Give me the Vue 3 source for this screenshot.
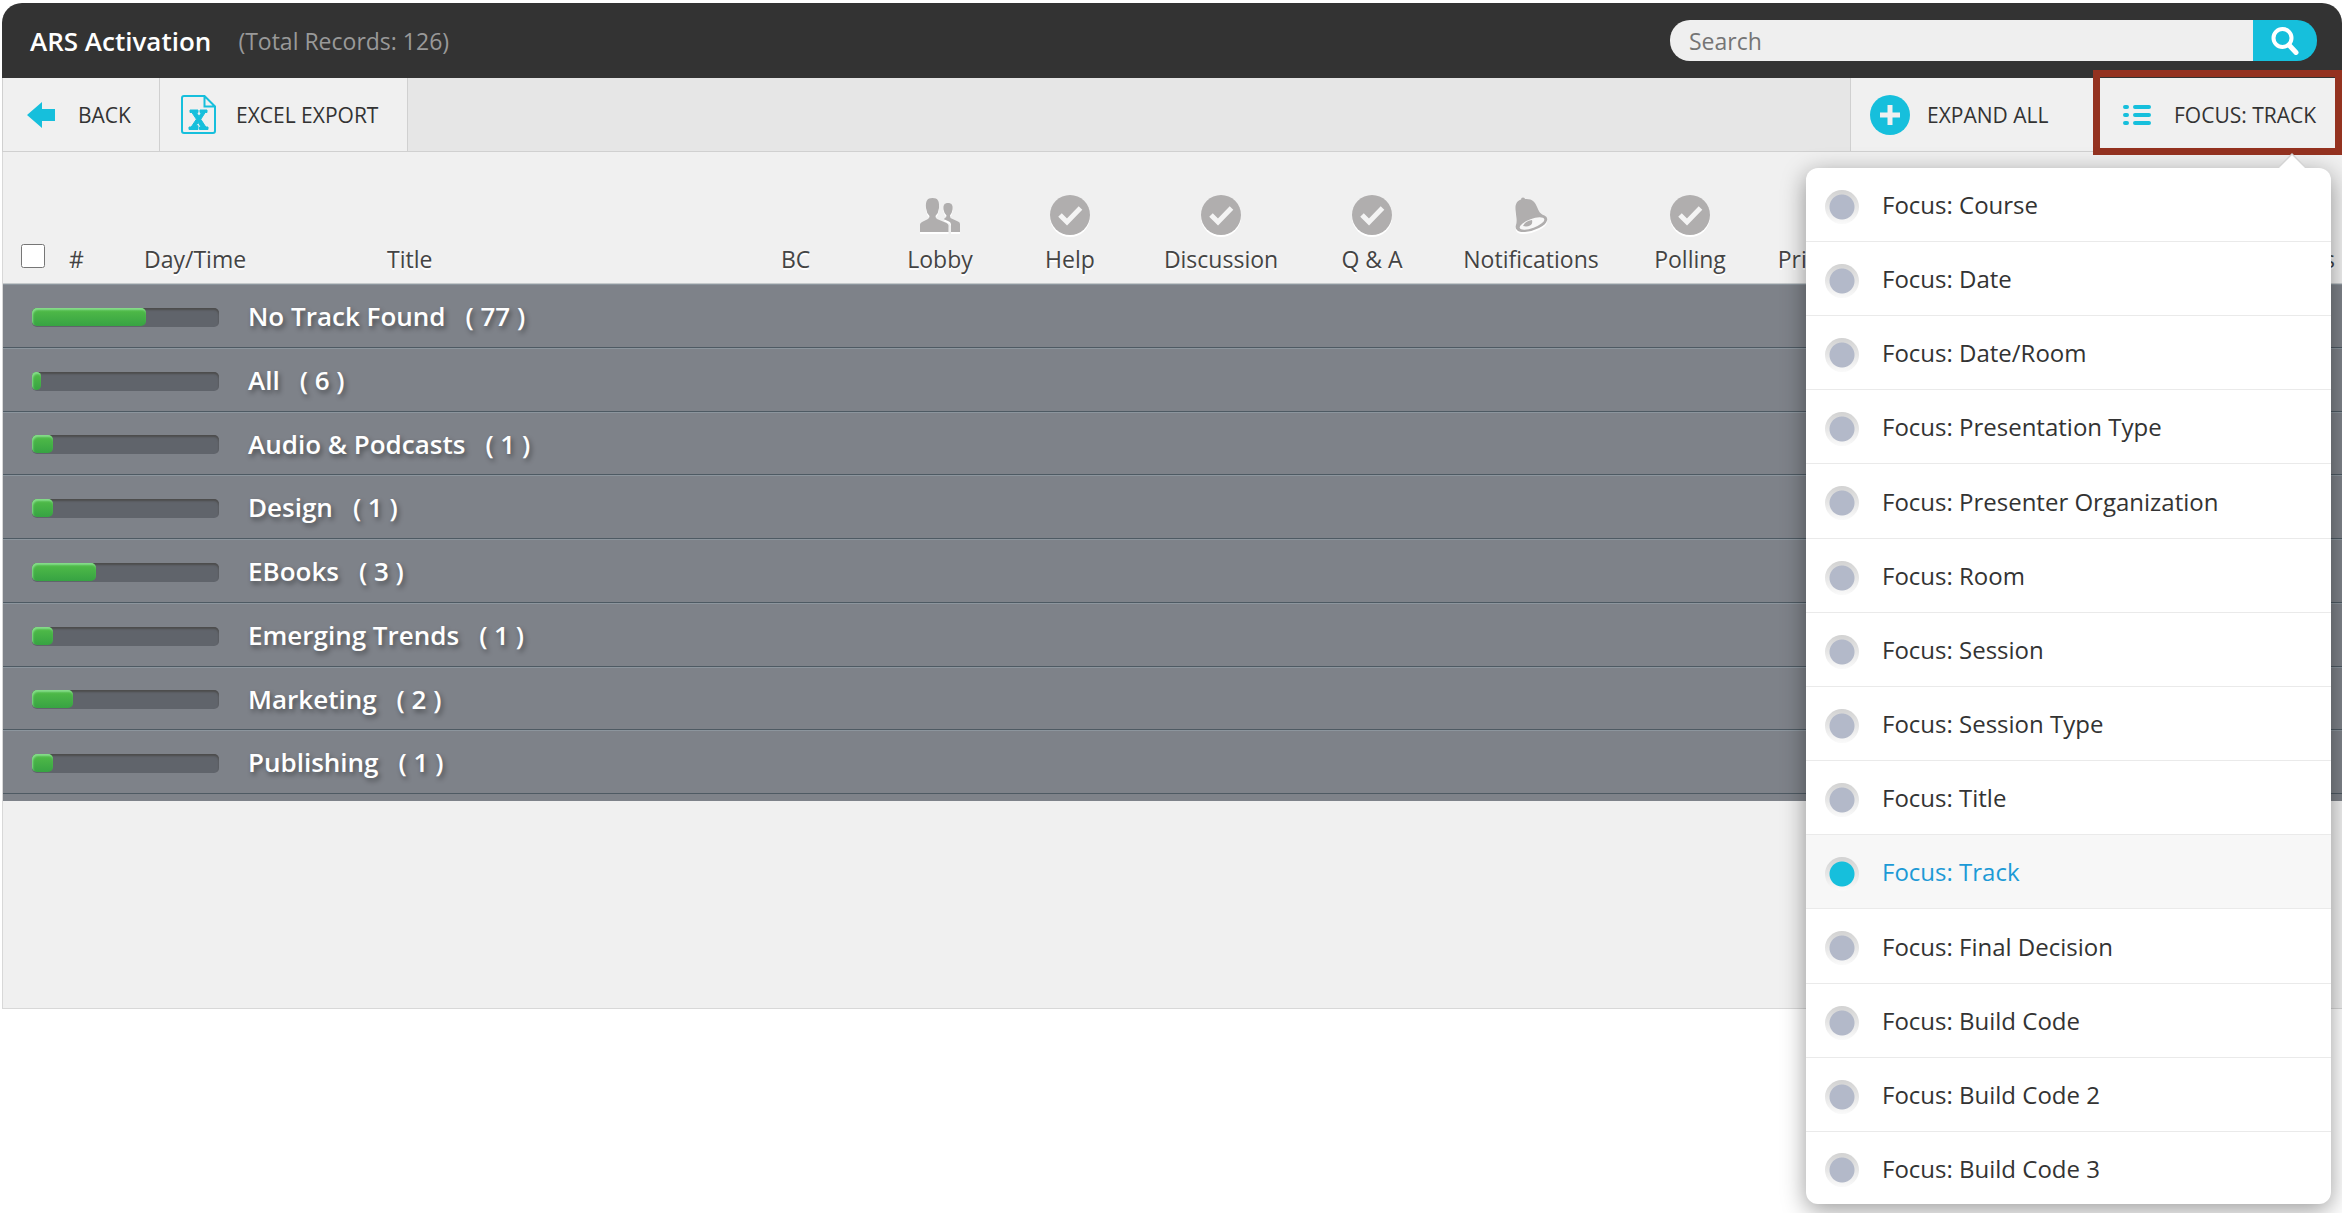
<script setup>
import { ref } from 'vue'

const search = ref('')
const allSelected = ref(false)
const focus = ref('Track')

const focusOptions = [
  'Course', 'Date', 'Date/Room', 'Presentation Type', 'Presenter Organization',
  'Room', 'Session', 'Session Type', 'Title', 'Track', 'Final Decision',
  'Build Code', 'Build Code 2', 'Build Code 3',
]

const features = [
  { label: 'Lobby', icon: 'people' },
  { label: 'Help', icon: 'check' },
  { label: 'Discussion', icon: 'check' },
  { label: 'Q & A', icon: 'check' },
  { label: 'Notifications', icon: 'bell' },
  { label: 'Polling', icon: 'check' },
  { label: 'Private', icon: '' },
]

const tracks = [
  { name: 'No Track Found', count: 77, progress: 61 },
  { name: 'All', count: 6, progress: 5 },
  { name: 'Audio & Podcasts', count: 1, progress: 11 },
  { name: 'Design', count: 1, progress: 11 },
  { name: 'EBooks', count: 3, progress: 34 },
  { name: 'Emerging Trends', count: 1, progress: 11 },
  { name: 'Marketing', count: 2, progress: 22 },
  { name: 'Publishing', count: 1, progress: 11 },
]
</script>

<template>
  <main class="page">
    <header class="titlebar">
      <h1>ARS Activation</h1>
      <span class="total">(Total Records: 126)</span>
      <form class="search" role="search" @submit.prevent>
        <input v-model="search" type="text" placeholder="Search" aria-label="Search" />
        <button type="submit" aria-label="Search">
          <svg width="28" height="28" viewBox="0 0 28 28" fill="none" stroke="#fff">
            <circle cx="11.500" cy="11" r="9" stroke-width="4" />
            <path d="M18 18l7 7.500" stroke-width="5" stroke-linecap="round" />
          </svg>
        </button>
      </form>
    </header>

    <nav class="toolbar">
      <button class="tool back" type="button">
        <svg width="28" height="26" viewBox="0 0 28 26" fill="#16bfdc">
          <path d="M0 13L15 0v7h13v12H15v7z" />
        </svg>
        Back
      </button>
      <button class="tool export" type="button">
        <svg width="35" height="39" viewBox="0 0 35 39">
          <path d="M3 1h20.500L34 11.500V36a2 2 0 0 1-2 2H3a2 2 0 0 1-2-2V3a2 2 0 0 1 2-2zM23.500 1v10.500H34" fill="none" stroke="#16bfdc" stroke-width="2" />
          <path d="M9 15h8v2.500h-1.500l2.500 4 2.500-4H19V15h7v2.500h-1.800l-4.400 6.800 5 7.700H27v2.500h-8.500V32h1.500l-2.800-4.500-2.200 3.200h2v3.800H8V32h2.200l5.200-7.800-4.500-6.700H9z" fill="#16bfdc" stroke="#16bfdc" />
        </svg>
        Excel Export
      </button>
      <button class="tool expand" type="button">
        <svg width="40" height="40" viewBox="0 0 40 40">
          <circle cx="20" cy="20" r="20" fill="#16bfdc" />
          <path d="M20 10v20M10 20h20" stroke="#f0f0f0" stroke-width="5" />
        </svg>
        Expand All
      </button>
      <div class="focus">
        <button class="tool focus-button" type="button" aria-haspopup="true" aria-expanded="true">
          <svg width="28" height="20" viewBox="0 0 28 20" stroke="#16bfdc" stroke-width="4" stroke-linecap="round">
            <path d="M2 2h2M2 10h2M2 18h2M12 2h14M12 10h14M12 18h14" />
          </svg>
          Focus: Track
        </button>
        <div class="menu" role="radiogroup" aria-label="Focus">
          <label v-for="option in focusOptions" :key="option" class="option" :class="{ selected: option === focus }">
            <input v-model="focus" type="radio" name="focus" :value="option" />
            Focus: {{ option }}
          </label>
        </div>
      </div>
    </nav>

    <section class="content">
      <table>
        <colgroup>
          <col class="c-select" />
          <col class="c-number" />
          <col class="c-day" />
          <col class="c-title" />
          <col class="c-bc" />
          <col class="c-small" />
          <col class="c-small" />
          <col class="c-wide" />
          <col class="c-small" />
          <col class="c-wider" />
          <col class="c-small" />
          <col class="c-private" />
          <col />
        </colgroup>
        <thead>
          <tr>
            <th class="select"><input v-model="allSelected" type="checkbox" aria-label="Select all" /></th>
            <th>#</th>
            <th>Day/Time</th>
            <th>Title</th>
            <th>BC</th>
            <th v-for="feature in features" :key="feature.label" class="feature">
              <svg v-if="feature.icon === 'check'" width="40" height="40" viewBox="0 0 40 40">
                <circle cx="20" cy="20" r="20" fill="#b0aeae" />
                <path d="M10 20l7 7 13.500-14" fill="none" stroke="#f4f4f4" stroke-width="5" />
              </svg>
              <svg v-else-if="feature.icon === 'people'" width="40" height="40" viewBox="0 0 40 40" fill="#b0aeae">
                <path d="M0 37v-7.500q0-1.500 2-2.500l6-3q1.500-1 1.500-3-3-3-3.500-8C5.500 6 7 3 12.500 3s7 3 6.500 10q-.5 5-3.500 8 0 2 1.500 3l9.500 4q2 1 2 2.500V37z" />
                <path d="M31 37v-7.500q0-2-2-3L24 24.300l.8-1.300q1.700-.5 1.700-2.500-2.500-2.500-3-6c-.5-4.500 1-6.500 4.500-6.500s5 2 4.500 6.500q-.5 3.500-2.500 6 0 2.500 1.500 3l6.500 3q2 .8 2 2.500v8z" />
              </svg>
              <svg v-else-if="feature.icon === 'bell'" width="40" height="40" viewBox="0 0 40 40">
                <path d="M6 35q-2-1.500-1-5 1-3 .3-8L4.500 15C4 9 6 6 10 4.500q0-2 2-2t2 1.500c7-.5 10 2.500 12.500 9 2 5 3.500 6 7 7.500q3.500 1.500 2.500 5-1 4-8 7.500T14 37q-6 .5-8-2z" fill="#b0aeae" />
                <ellipse cx="21" cy="28.500" rx="13" ry="4.500" transform="rotate(-20 21 28.500)" fill="#f7f7f7" />
                <path d="M12 31q2-5 9-6 1 4-2 5.500T12 31z" fill="#b0aeae" />
              </svg>
              {{ feature.label }}
            </th>
            <th class="last">Surveys</th>
          </tr>
        </thead>
        <tbody>
          <tr v-for="track in tracks" :key="track.name">
            <td colspan="13">
              <div class="track">
                <div class="bar" role="progressbar" :aria-label="track.name" :aria-valuenow="track.progress">
                  <div class="fill" :style="{ width: track.progress + '%' }"></div>
                </div>
                <span>{{ track.name }}</span>
                <span>( {{ track.count }} )</span>
              </div>
            </td>
          </tr>
        </tbody>
      </table>
    </section>
  </main>
</template>

<style>
body {
  margin: 0;
  background: #fff;
}
</style>

<style scoped>
* {
  box-sizing: border-box;
}

.page {
  min-height: 100vh;
  padding: 3px 0 0 2px;
  font-family: "Open Sans", "Noto Sans", sans-serif;
  font-size: 24px;
  color: #333;
}

button,
input {
  margin: 0;
  font: inherit;
}

button {
  border: 0;
  cursor: pointer;
}

svg {
  flex: none;
}

.titlebar {
  display: flex;
  align-items: center;
  height: 75px;
  padding: 0 25px 0 28px;
  border-radius: 20px 20px 0 0;
  background: #333;
}

h1 {
  margin: 0;
  font-size: 26px;
  font-weight: 600;
  color: #fff;
}

.total {
  margin-left: 27px;
  color: #999;
  font-size: 23px;
}

.search {
  display: flex;
  width: 647px;
  height: 41px;
  margin-left: auto;
}

.search input {
  flex: 1;
  min-width: 0;
  padding: 0 19px;
  border: 0;
  border-radius: 20px 0 0 20px;
  background: #efefef;
  color: #333;
  font-size: 23px;
}

.search input::placeholder {
  color: #757575;
}

.search button {
  display: flex;
  align-items: center;
  justify-content: center;
  width: 64px;
  padding: 0;
  border-radius: 0 20px 20px 0;
  background: #16bfdc;
}

.toolbar {
  display: flex;
  height: 74px;
  border: solid #d0d0d0;
  border-width: 0 0 1px 1px;
  background: #e6e6e6;
}

.tool {
  display: flex;
  align-items: center;
  padding: 0 24px;
  background: #f0f0f0;
  color: #333;
  font-size: 21px;
  font-weight: 500;
  text-transform: uppercase;
  white-space: nowrap;
}

.back {
  gap: 23px;
  width: 157px;
  border-right: 1px solid #d0d0d0;
}

.export {
  gap: 20px;
  width: 248px;
  padding: 0 21px;
  border-right: 1px solid #d0d0d0;
}

.expand {
  gap: 17px;
  width: 243px;
  margin-left: auto;
  padding: 0 19px;
  border-left: 1px solid #d0d0d0;
}

.focus {
  position: relative;
  display: flex;
  width: 249px;
}

.focus::after {
  content: "";
  position: absolute;
  inset: -8px 0 -4px;
  border: 7px solid #943220;
  pointer-events: none;
}

.focus-button {
  flex: 1;
  gap: 23px;
  padding: 0 0 0 30px;
}

.menu {
  position: absolute;
  z-index: 1;
  top: 90px;
  right: 11px;
  width: 525px;
  border-radius: 12px;
  background: #fff;
  box-shadow: 0 6px 24px rgba(0, 0, 0, 0.4);
}

.menu::before {
  content: "";
  position: absolute;
  top: -13px;
  right: 26px;
  border: solid transparent;
  border-width: 0 13px 13px;
  border-bottom-color: #fff;
  filter: drop-shadow(0 -2px 0 #d4d4d4);
}

.option {
  display: flex;
  align-items: center;
  gap: 23px;
  height: 74px;
  padding-left: 19px;
  border-bottom: 1px solid #eaeaea;
  cursor: pointer;
}

.option:nth-child(6n + 5) {
  height: 75px;
}

.option:last-child {
  height: 72px;
  border-bottom: 0;
}

.option.selected {
  background: #f7f7f7;
  color: #1c9ad6;
}

.option input {
  appearance: none;
  width: 34px;
  height: 34px;
  margin-top: 4px;
  border-radius: 50%;
  background:
    radial-gradient(circle, #b3b9c9 12px, transparent 13px),
    linear-gradient(#d2d2d2, #fafafa);
}

.option input:checked {
  background:
    radial-gradient(circle, #16bfdc 12px, transparent 13px),
    linear-gradient(#d2d2d2, #fafafa);
}

.content {
  min-height: 857px;
  margin-left: 1px;
  border: solid #d8d8d8;
  border-width: 0 0 1px;
  background: #f0f0f0;
  box-shadow: -1px 0 0 #d8d8d8;
}

table {
  width: 100%;
  table-layout: fixed;
  border-collapse: separate;
  border-spacing: 0;
  border-bottom: 7px solid #7e8289;
}

.c-select { width: 66px; }
.c-number { width: 75px; }
.c-day { width: 243px; }
.c-title { width: 394px; }
.c-bc { width: 94px; }
.c-small { width: 130px; }
.c-wide { width: 172px; }
.c-wider { width: 188px; }
.c-private { width: 120px; }

th {
  height: 132px;
  padding: 0 0 8px;
  border-bottom: 1px solid #c4c8ca;
  color: #444;
  font-size: 23px;
  font-weight: 500;
  line-height: 32px;
  text-align: left;
  text-shadow: 0 2px 0 #fff;
  vertical-align: bottom;
  white-space: nowrap;
}

.select {
  padding-left: 18px;
}

.select input {
  display: block;
  width: 24px;
  height: 24px;
  margin-bottom: 7px;
}

.feature {
  text-align: center;
}

.feature svg {
  display: block;
  margin: 0 auto 8px;
  filter: drop-shadow(0 2px 0 #fff);
}

.last {
  padding-right: 7px;
  text-align: right;
}

td {
  height: 64px;
  padding: 0 29px;
  border-top: 1px solid #8c959d;
  border-bottom: 1px solid #4e5a63;
  background: #7e8289;
}

/* Eight groups share 510px, so every fourth one is a pixel shorter. */
tr:nth-child(4n + 3) td {
  height: 63px;
}

.track {
  display: flex;
  align-items: center;
  gap: 20px;
  color: #fff;
  font-size: 26px;
  font-weight: 600;
  line-height: 36px;
  text-shadow: 2px 3px 5px rgba(0, 0, 0, 0.4);
}

.bar {
  width: 187px;
  height: 19px;
  margin: 2px 9px 0 0;
  border-radius: 5px;
  background: #60646b;
  box-shadow: inset 0 2px 2px #4c4c4c;
}

.fill {
  height: 18px;
  border-radius: 5px;
  background: linear-gradient(#52bd48, #37a343);
  box-shadow: inset 1px 2px 2px #86dc8c;
}
</style>
